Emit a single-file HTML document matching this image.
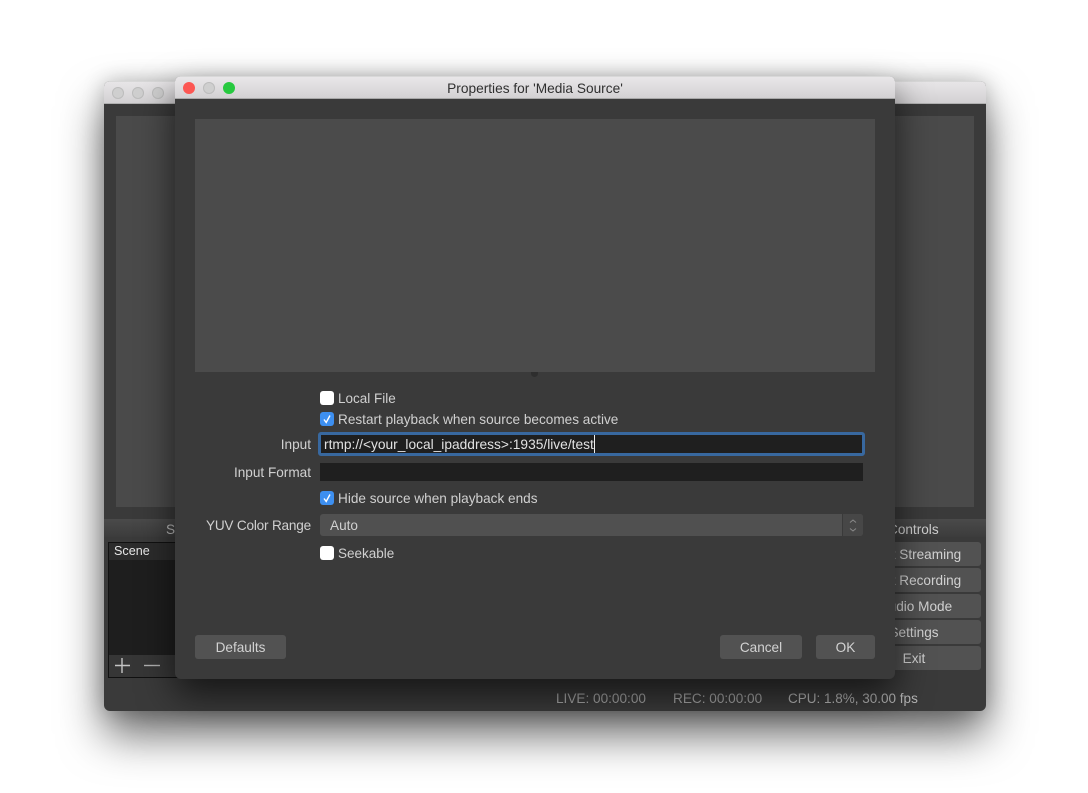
<!DOCTYPE html>
<html><head><meta charset="utf-8">
<style>
html,body{margin:0;padding:0;width:1088px;height:793px;overflow:hidden;background:#fff;font-family:"Liberation Sans",sans-serif}
.a{position:absolute}
.t{position:absolute;white-space:nowrap;font-size:13.6px;line-height:20px;color:#d0d0d0}
.r{text-align:right}
.btn{position:absolute;background:#525252;border-radius:3px;color:#d2d2d2;font-size:13.6px;text-align:center;line-height:26px;height:24px;white-space:nowrap}
.cb{position:absolute;left:320px;width:14px;height:14px;border-radius:3px;background:#fff}
.cb.on{background:#3d8ff0}
.light{position:absolute;width:12px;height:12px;border-radius:50%;background:#cfcfcf;box-shadow:inset 0 0 0 1px #bdbdbd}
</style></head><body>

<div class="a" id="main" style="left:104px;top:81px;width:882px;height:630px;border-radius:6px;background:#3a3a3a;box-shadow:0 24px 44px rgba(0,0,0,.58),0 0 22px rgba(0,0,0,.22);overflow:hidden">
  <div class="a" style="left:0;top:0;width:882px;height:22px;background:linear-gradient(#e8e6e8,#d3d1d3);border-bottom:1px solid #b0b0b0;box-shadow:inset 0 1px 0 #d8d8d8"></div>
  <div class="light" style="left:8px;top:6px"></div>
  <div class="light" style="left:28px;top:6px"></div>
  <div class="light" style="left:48px;top:6px"></div>
  <div class="a" style="left:12px;top:35px;width:858px;height:391px;background:#4a4a4a"></div>
  <div class="a" style="left:0;top:438px;width:882px;height:18px;background:linear-gradient(#4a4a4a,#3c3c3c)"></div>
  <div class="a" style="left:4px;top:461px;width:400px;height:136px;background:#1e1e1e;border:1px solid #111;box-sizing:border-box"></div>
  <div class="a" style="left:5px;top:462px;width:98px;height:17px;background:#2c2c2c"></div>
  <div class="a" style="left:5px;top:574px;width:98px;height:22px;background:#363636"></div>
  <div class="btn" style="left:743px;top:461px;width:134px">Start Streaming</div>
  <div class="btn" style="left:743px;top:487px;width:134px">Start Recording</div>
  <div class="btn" style="left:743px;top:513px;width:134px">Studio Mode</div>
  <div class="btn" style="left:743px;top:539px;width:134px">Settings</div>
  <div class="btn" style="left:743px;top:565px;width:134px">Exit</div>
</div>

<div class="t" style="left:166px;top:520px;color:#bdbdbd">Sc</div>
<div class="t" style="left:114px;top:541px;font-size:12.6px;color:#e6e6e6">Scene</div>
<svg class="a" style="left:112px;top:656px" width="50" height="20"><path d="M10 2V17M3 9.500H18" stroke="#c4c4c4" stroke-width="1.400" fill="none"/><path d="M32 9.500H48" stroke="#b0b0b0" stroke-width="1.400" fill="none"/></svg>
<div class="t" style="left:888px;top:520px;color:#cfcfcf">Controls</div>

<div id="sb" class="t" style="left:556px;top:689px;color:#a8a8a8">LIVE: 00:00:00</div>
<div class="t" style="left:673px;top:689px;color:#a8a8a8">REC: 00:00:00</div>
<div class="t" style="left:788px;top:689px;color:#b8b8b8;font-size:13.5px">CPU: 1.8%, 30.00 fps</div>

<div class="a" style="left:175px;top:76px;width:720px;height:603px;border-radius:6px;background:#3a3a3a;box-shadow:0 16px 36px rgba(0,0,0,.62);overflow:hidden">
  <div class="a" style="left:0;top:0;width:720px;height:22px;background:linear-gradient(#eae8ea,#d3d1d3);border-bottom:1px solid #a8a8a8;box-shadow:inset 0 1px 0 #d8d8d8"></div>
  <div class="a" style="left:0;top:3px;width:720px;text-align:center;font-size:13.7px;line-height:20px;color:#303030">Properties for 'Media Source'</div>
  <div class="a" style="left:8px;top:6px;width:12px;height:12px;border-radius:50%;background:#fc5753"></div>
  <div class="light" style="left:28px;top:6px"></div>
  <div class="a" style="left:48px;top:6px;width:12px;height:12px;border-radius:50%;background:#27c93f"></div>
  <div class="a" style="left:20px;top:43px;width:680px;height:253px;background:#4b4b4b"></div>
  <div class="a" style="left:356px;top:296px;width:7px;height:5px;border-radius:0 0 4px 4px;background:#2e2e2e"></div>
</div>

<div class="cb" style="top:391px"></div>
<div class="t" style="left:338px;top:389px;font-size:13.5px">Local File</div>
<div class="cb on" style="top:412px"></div>
<svg class="a" style="left:320px;top:412px" width="14" height="14"><path d="M4 7.500L6.200 10.500L10 3.500" stroke="#fff" stroke-width="1.4" fill="none"/></svg>
<div class="t" style="left:338px;top:410px">Restart playback when source becomes active</div>

<div class="t r" style="left:199px;width:112px;top:435px">Input</div>
<div class="a" style="left:318px;top:432px;width:541px;height:18px;background:#1f1f1f;border:3px solid #38689f;border-radius:3px"></div>
<div class="t" style="left:324px;top:435px;color:#e2e2e2;border-right:1px solid #eee;height:18px;line-height:20px;font-size:13.75px">rtmp://&lt;your_local_ipaddress&gt;:1935/live/test</div>

<div class="t r" style="left:199px;width:112px;top:463px">Input Format</div>
<div class="a" style="left:320px;top:463px;width:543px;height:18px;background:#1f1f1f"></div>

<div class="cb on" style="top:491px"></div>
<svg class="a" style="left:320px;top:491px" width="14" height="14"><path d="M4 7.500L6.200 10.500L10 3.500" stroke="#fff" stroke-width="1.4" fill="none"/></svg>
<div class="t" style="left:338px;top:489px">Hide source when playback ends</div>

<div class="t r" style="left:189px;width:122px;top:516px;letter-spacing:-.2px">YUV Color Range</div>
<div class="a" style="left:320px;top:514px;width:543px;height:22px;border-radius:3px;background:#505050"></div>
<div class="a" style="left:842px;top:514px;width:21px;height:22px;border-radius:0 3px 3px 0;background:#474747;border-left:1px solid #3a3a3a;box-sizing:border-box"></div>
<svg class="a" style="left:848px;top:518px" width="10" height="15"><path d="M2 4.500L5 2L8 4.500M2 10.500L5 13L8 10.500" stroke="#8a8a8a" stroke-width="1" fill="none"/></svg>
<div class="t" style="left:330px;top:516px">Auto</div>

<div class="cb" style="top:546px"></div>
<div class="t" style="left:338px;top:544px;font-size:13.5px">Seekable</div>

<div class="btn" style="left:195px;top:635px;width:91px">Defaults</div>
<div class="btn" style="left:720px;top:635px;width:82px">Cancel</div>
<div class="btn" style="left:816px;top:635px;width:59px">OK</div>

</body></html>
